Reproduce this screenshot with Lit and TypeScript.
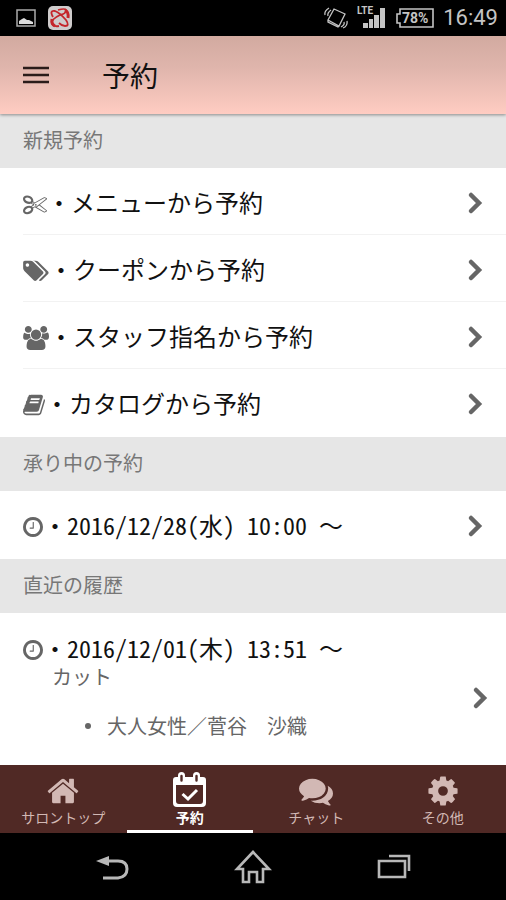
import { LitElement, html, css, svg } from "lit";
import { customElement } from "lit/decorators.js";
import { classMap } from "lit/directives/class-map.js";

interface Glyph {
  box: string;
  width: number;
  path: string;
}

const SCISSORS: Glyph = {
  box: "0 0 1792 1792",
  width: 24,
  path: "M960 896q26 0 45 19t19 45-19 45-45 19-45-19-19-45 19-45 45-19zm300 64l507 398q28 20 25 56-5 35-35 51l-128 64q-13 7-29 7-17 0-31-8l-690-387-110 66q-8 4-12 5 14 49 10 97-7 77-56 147.5t-132 123.5q-132 84-277 84-136 0-222-78-90-84-79-207 7-76 56-147t131-124q132-84 278-84 83 0 151 31 9-13 22-22l122-73-122-73q-13-9-22-22-68 31-151 31-146 0-278-84-82-53-131-124t-56-147q-5-59 15.5-113t63.5-93q85-79 222-79 145 0 277 84 83 52 132 123t56 148q4 48-10 97 4 1 12 5l110 66 690-387q14-8 31-8 16 0 29 7l128 64q30 16 35 51 3 36-25 56zm-681-260q46-42 21-108t-106-117q-92-59-192-59-74 0-113 36-46 42-21 108t106 117q92 59 192 59 74 0 113-36zm-85 745q81-51 106-117t-21-108q-39-36-113-36-100 0-192 59-81 51-106 117t21 108q39 36 113 36 100 0 192-59zm178-613l96 58v-11q0-36 33-56l14-8-79-44-26 26q-3 3-10 11t-12 12q-2 2-4 3.5t-3 2.5zm224 224l96 32 736-576-128-64-768 431v113l-160 96 9 8q2 2 7 6 4 4 11 12t11 12l26 26zm704 416l128-64-520-408-177 138q-2 3-13 7z",
};
const TAGS: Glyph = {
  box: "0 0 1920 1792",
  width: 26,
  path: "M448 448q0-53-37.5-90.5t-90.5-37.5-90.5 37.5-37.5 90.5 37.5 90.5 90.5 37.5 90.5-37.5 37.5-90.5zm1067 576q0 53-37 90l-491 492q-39 37-91 37-53 0-90-37l-715-716q-38-37-64.5-101t-26.5-117v-416q0-52 38-90t90-38h416q53 0 117 26.5t102 64.5l715 714q37 39 37 91zm384 0q0 53-37 90l-491 492q-39 37-91 37-36 0-59-14t-53-45l470-470q37-37 37-90 0-52-37-91l-715-714q-38-38-102-64.5t-117-26.5h224q53 0 117 26.5t102 64.5l715 714q37 39 37 91z",
};
const USERS: Glyph = {
  box: "64 0 1920 1792",
  width: 26,
  path: "M657 896q-162 5-265 128h-134q-82 0-138-40.5t-56-118.5q0-353 124-353 6 0 43.5 21t97.5 42.5 119 21.5q67 0 133-23-5 37-5 66 0 159 93 284zm1071 637q0 120-73 189.5t-194 69.5h-874q-121 0-194-69.5t-73-189.5q0-53 3.5-103.5t14-109 26.5-108.5 43-97.5 62-81 85.5-53.5 111.5-20q10 0 43 21.5t73 48 107 48 135 21.5 135-21.5 107-48 73-48 43-21.5q61 0 111.5 20t85.5 53.5 62 81 43 97.5 26.5 108.5 14 109 3.5 103.5zm-1024-1277q0 106-75 181t-181 75-181-75-75-181 75-181 181-75 181 75 75 181zm704 384q0 159-112.5 271.5t-271.5 112.5-271.5-112.5-112.5-271.5 112.5-271.5 271.5-112.5 271.5 112.5 112.5 271.5zm576 225q0 78-56 118.5t-138 40.5h-134q-103-123-265-128 93-125 93-284 0-29-5-66 66 23 133 23 59 0 119-21.5t97.5-42.5 43.5-21q124 0 124 353zm-128-609q0 106-75 181t-181 75-181-75-75-181 75-181 181-75 181 75 75 181z",
};
const BOOK: Glyph = {
  box: "64 0 1664 1792",
  width: 22,
  path: "M1703 478q40 57 18 129l-275 906q-19 64-76.5 107.5t-122.5 43.5h-923q-77 0-148.5-53.5t-99.5-131.5q-24-67-2-127 0-4 3-27t4-37q1-8-3-21.5t-3-19.5q2-11 8-21t16.5-23.5 16.5-23.5q23-38 45-91.5t30-91.5q3-10 .5-30t-.5-28q3-11 17-28t17-23q21-36 42-92t25-90q1-9-2.5-32t.5-28q4-13 22-30.5t22-22.5q19-26 42.5-84.5t27.5-96.5q1-8-3-25.5t-2-26.5q2-8 9-18t18-23 17-21q8-12 16.5-30.5t15-35 16-36 19.5-32 26.5-23.5 36-11.5 47.5 5.5l-1 3q38-9 51-9h761q74 0 114 56t18 130l-274 906q-36 119-71.5 153.5t-128.5 34.5h-869q-27 0-38 15-11 16-1 43 24 70 144 70h923q29 0 56-15.5t35-41.5l300-987q7-22 5-57 38 15 59 43zm-1064 2q-4 13 2 22.5t20 9.5h608q13 0 25.5-9.5t16.5-22.5l21-64q4-13-2-22.5t-20-9.5h-608q-13 0-25.5 9.5t-16.5 22.5zm-83 256q-4 13 2 22.5t20 9.5h608q13 0 25.5-9.5t16.5-22.5l21-64q4-13-2-22.5t-20-9.5h-608q-13 0-25.5 9.5t-16.5 22.5z",
};
const CLOCK: Glyph = {
  box: "128 0 1536 1792",
  width: 20,
  path: "M960 544v448q0 14-9 23t-23 9h-260q-14 0-23-9t-9-23v-24q0-14 9-23t23-9h204v-392q0-14 9-23t23-9h24q14 0 23 9t9 23zm480 352q0-148-73-273t-198-198-273-73-273 73-198 198-73 273 73 273 198 198 273 73 273-73 198-198 73-273zm224 0q0 209-103 385.5t-279.5 279.5-385.5 103-385.5-103-279.5-279.5-103-385.5 103-385.5 279.5-279.5 385.5-103 385.5 103 279.5 279.5 103 385.5z",
};

const HOME =
  "M1472 992v480q0 26-19 45t-45 19h-384v-384h-256v384h-384q-26 0-45-19t-19-45v-480q0-1 .5-3t.5-3l575-474 575 474q1 2 1 6zm223-69l-62 74q-8 9-21 11h-3q-13 0-21-7l-692-577-692 577q-12 8-24 7-13-2-21-11l-62-74q-8-10-7-23.5t11-21.5l719-599q32-26 76-26t76 26l244 204v-195q0-14 9-23t23-9h192q14 0 23 9t9 23v408l219 182q10 8 11 21.5t-7 23.5z";
const COMMENTS =
  "M1408 768q0 139-94 257t-256.5 186.5-353.5 68.5q-86 0-176-16-124 88-278 128-36 9-86 16h-3q-11 0-20.5-8t-11.5-21q-1-3-1-6.5t.5-6.5 2-6l2.5-5 3.5-5.5 4-5 4.5-5 4-4.5q5-6 23-25t26-29.5 22.5-29 25-38.5 20.5-44q-124-72-195-177t-71-224q0-139 94-257t256.5-186.5 353.5-68.5 353.5 68.5 256.5 186.5 94 257zm384 256q0 120-71 224.5t-195 176.5q10 24 20.5 44t25 38.5 22.5 29 26 29.5 23 25q1 1 4 4.5t4.5 5 4 5 3.5 5.5l2.5 5 2 6 .5 6.5-1 6.5q-3 14-13 22t-22 7q-50-7-86-16-154-40-278-128-90 16-176 16-271 0-472-132 58 4 88 4 161 0 309-45t264-129q125-92 192-212t67-254q0-77-23-152 129 71 204 178t75 230z";
const COG =
  "M1152 896q0-106-75-181t-181-75-181 75-75 181 75 181 181 75 181-75 75-181zm512-109v222q0 12-8 23t-20 13l-185 28q-19 54-39 91 35 50 107 138 10 12 10 25t-9 23q-27 37-99 108t-94 71q-12 0-26-9l-138-108q-44 23-91 38-16 136-29 186-7 28-36 28h-222q-14 0-24.5-8.5t-11.5-21.5l-28-184q-49-16-90-37l-141 107q-10 9-25 9-14 0-25-11-126-114-165-168-7-10-7-23 0-12 8-23 15-21 51-66.5t54-70.5q-27-50-41-99l-183-27q-13-2-21-12.5t-8-23.5v-222q0-12 8-23t19-13l186-28q14-46 39-92-40-57-107-138-10-12-10-24 0-10 9-23 26-36 98.5-107.5t94.5-71.5q13 0 26 10l138 107q44-23 91-38 16-136 29-186 7-28 36-28h222q14 0 24.5 8.5t11.5 21.5l28 184q49 16 90 37l142-107q9-9 24-9 13 0 25 10 129 119 165 170 7 8 7 22 0 12-8 23-15 21-51 66.5t-54 70.5q26 50 41 98l183 28q13 2 21 12.5t8 23.5z";

const CALENDAR = svg`
  <path fill="currentColor" fill-rule="evenodd" d="M3 5H30Q33 5 33 8V31Q33 35 29 35H4Q0 35 0 31V8Q0 5 3 5ZM3 13V29Q3 32 6 32H27Q30 32 30 29V13Z"/>
  <rect x="5" y="0" width="7" height="12" rx="3.5" fill="currentColor"/>
  <rect x="20" y="0" width="7" height="12" rx="3.5" fill="currentColor"/>
  <path d="M8.500 4V8.500M23.500 4V8.500" stroke="#502925" stroke-width="2.400" stroke-linecap="round"/>
  <path d="M9.500 22L15 27L24 18" fill="none" stroke="currentColor" stroke-width="3"/>`;

const glyph = (g: Glyph) => html`
  <svg class="glyph" width=${g.width} height="24" viewBox=${g.box} aria-hidden="true">
    <path fill="currentColor" d=${g.path} />
  </svg>`;

const chevron = () => html`
  <svg class="chevron" width="16" height="24" viewBox="0 0 16 24" aria-hidden="true">
    <path d="M4 4L12 12L4 20" fill="none" stroke="currentColor" stroke-width="4.500" stroke-linecap="round" />
  </svg>`;

@customElement("app-root")
export class AppRoot extends LitElement {
  static styles = css`
    :host {
      display: flex;
      flex-direction: column;
      min-height: 100vh;
      background: #fff;
      color: #111;
      font-family: "Noto Sans CJK JP", sans-serif;
    }
    svg {
      display: block;
      flex: none;
    }
    a {
      color: inherit;
      text-decoration: none;
    }
    button {
      display: flex;
      padding: 0;
      border: 0;
      background: none;
      color: inherit;
      font: inherit;
      cursor: pointer;
    }
    .status {
      display: flex;
      align-items: center;
      justify-content: space-between;
      height: 36px;
      padding: 0 8px 0 16px;
      background: #000;
      color: #c4c4c4;
    }
    .side {
      display: flex;
      align-items: center;
      gap: 12px;
    }
    .side.right {
      gap: 8px;
    }
    .battery {
      font: 700 14px Roboto, sans-serif;
      fill: currentColor;
    }
    .lte {
      font: 700 10px Roboto, sans-serif;
      fill: currentColor;
    }
    .time {
      font: 400 22px/36px Roboto, sans-serif;
    }
    .header {
      display: flex;
      align-items: center;
      gap: 52px;
      height: 78px;
      padding: 0 22px;
      background: linear-gradient(#d2aaa0, #dfb5ac 40%, #ffccc2);
      box-shadow: 0 1px 3px rgba(0, 0, 0, 0.4);
      z-index: 1;
    }
    h1 {
      margin: 0;
      font-size: 28px;
      font-weight: 400;
      line-height: 40px;
    }
    main {
      flex: 1;
    }
    h2 {
      margin: 0;
      padding: 0 23px 2px;
      background: #e6e6e6;
      color: #777;
      font-size: 20px;
      font-weight: 400;
      line-height: 52px;
    }
    ul {
      margin: 0;
      padding: 0;
      list-style: none;
    }
    .menu {
      padding: 0 0 2px 23px;
    }
    .menu > li + li {
      border-top: 1px solid #f2f2f2;
    }
    .row {
      display: flex;
      align-items: center;
      padding: 2px 23px 0 0;
      font-size: 24px;
      line-height: 64px;
    }
    .label {
      flex: 1;
      white-space: pre;
    }
    .date {
      font-feature-settings: "hwid";
    }
    .glyph {
      margin-top: 4px;
      color: #666;
    }
    .chevron {
      margin-top: 2px;
      color: #666;
    }
    .history {
      display: flex;
      align-items: center;
      justify-content: space-between;
      padding: 18px 18px 22px 23px;
      color: #666;
      font-size: 20px;
      line-height: 22px;
    }
    .history .chevron {
      margin-top: 24px;
    }
    .when {
      display: flex;
      align-items: center;
      color: #111;
      font-size: 24px;
      line-height: 34px;
    }
    .course {
      margin: 1px 0 24px 29px;
    }
    .detail {
      padding-left: 62px;
    }
    .detail li {
      display: flex;
      align-items: center;
      gap: 16px;
      line-height: 28px;
    }
    .detail li::before {
      content: "";
      width: 6px;
      height: 6px;
      border-radius: 50%;
      background: #666;
    }
    .tabs {
      display: grid;
      grid-template-columns: repeat(4, 1fr);
      height: 68px;
      background: #502925;
      color: #d2b8b4;
      font-size: 14px;
      line-height: 18px;
    }
    .tab {
      display: flex;
      flex-direction: column;
      align-items: center;
      justify-content: flex-end;
      padding-bottom: 4px;
      border-bottom: 3px solid transparent;
    }
    .tab.active {
      border-color: #fff;
      color: #fff;
      font-weight: 700;
    }
    .system {
      display: flex;
      justify-content: center;
      align-items: center;
      gap: 104px;
      height: 67px;
      background: #000;
      color: #b8b8b8;
    }
  `;

  private menu = [
    { icon: SCISSORS, text: "メニューから予約" },
    { icon: TAGS, text: "クーポンから予約" },
    { icon: USERS, text: "スタッフ指名から予約" },
    { icon: BOOK, text: "カタログから予約" },
  ];

  private tabs = [
    { text: "サロントップ", path: HOME },
    { text: "予約", path: "" },
    { text: "チャット", path: COMMENTS },
    { text: "その他", path: COG },
  ];

  private row(icon: Glyph, text: unknown) {
    return html`<li>
      <a class="row" href="#">${glyph(icon)}<span class="label">・${text}</span>${chevron()}</a>
    </li>`;
  }

  private date(text: string) {
    return html`<span class="date">${text} </span>～`;
  }

  private tabIcon(path: string) {
    return path
      ? html`<svg width="34" height="34" viewBox="0 0 1792 1792" aria-hidden="true">
          <path fill="currentColor" d=${path} />
        </svg>`
      : html`<svg width="33" height="36" viewBox="0 0 33 36" aria-hidden="true">${CALENDAR}</svg>`;
  }

  render() {
    return html`
      <div class="status">
        <div class="side">
          <svg width="20" height="20" viewBox="0 0 20 20" aria-hidden="true">
            <path d="M1 2H19V18H1Z" fill="none" stroke="#aaa" stroke-width="1.500" />
            <path d="M3 16V13L6 11L8 10L11 12L13 12L15 13L17 14V16Z" fill="#ddd" />
          </svg>
          <svg width="24" height="24" viewBox="0 0 24 24" aria-hidden="true">
            <rect width="24" height="24" rx="5" fill="#cfcccc" />
            <g fill="none" stroke="#c4262b">
              <path d="M5 11Q1 4 7 5Q12 7 18 14Q22 20 17 20Q14 20 11 17" stroke-width="1.800" />
              <path d="M10 4Q17 2 18 4Q18 8 12 9Q3 13 4 18Q6 21 11 20" stroke-width="1.800" />
              <path d="M17 4Q21 6 20 12" stroke-width="3" />
              <path d="M4 13Q3 18 7 20" stroke-width="3" />
            </g>
          </svg>
        </div>
        <div class="side right">
          <svg width="26" height="24" viewBox="0 0 26 24" aria-hidden="true">
            <g fill="none" stroke="currentColor" stroke-width="1.300">
              <path d="M11 3L22 8L16 20L5 14ZM5 14L5 16L15 21L16 20" />
              <path d="M2 9Q1 5 6 2M5 10Q4 7 8 4M20 22Q25 20 24 15M18 21Q22 19 21 16" />
            </g>
          </svg>
          <svg width="30" height="26" viewBox="0 0 30 26" aria-label="LTE">
            <text class="lte" x="0" y="9">LTE</text>
            <path fill="currentColor" d="M6 18h5v5h-5zM12 14h4v9h-4zM17 10h5v13h-5zM23 3h5v20h-5z" />
          </svg>
          <svg width="40" height="22" viewBox="0 0 40 22" aria-label="78%">
            <path d="M5 2H38V20H5V16H2V7H5Z" fill="none" stroke="currentColor" stroke-width="1.600" />
            <text class="battery" x="7" y="16">78%</text>
          </svg>
          <span class="time">16:49</span>
        </div>
      </div>

      <header class="header">
        <button aria-label="メニュー">
          <svg width="28" height="24" viewBox="0 0 28 24">
            <path d="M1 5H27M1 12H27M1 19H27" stroke="#2a1c1a" stroke-width="2.600" />
          </svg>
        </button>
        <h1>予約</h1>
      </header>

      <main>
        <h2>新規予約</h2>
        <ul class="menu">
          ${this.menu.map((m) => this.row(m.icon, m.text))}
        </ul>
        <h2>承り中の予約</h2>
        <ul class="menu">
          ${this.row(CLOCK, this.date("2016/12/28(水) 10:00"))}
        </ul>
        <h2>直近の履歴</h2>
        <a class="history" href="#">
          <div>
            <div class="when">${glyph(CLOCK)}<span class="label">・${this.date("2016/12/01(木) 13:51")}</span></div>
            <div class="course">カット</div>
            <ul class="detail">
              <li>大人女性／菅谷　沙織</li>
            </ul>
          </div>
          ${chevron()}
        </a>
      </main>

      <nav class="tabs">
        ${this.tabs.map(
          (t) => html`<a class=${classMap({ tab: true, active: !t.path })} href="#">
            ${this.tabIcon(t.path)}<span>${t.text}</span>
          </a>`
        )}
      </nav>

      <div class="system">
        <button aria-label="戻る">
          <svg width="36" height="36" viewBox="0 0 36 36">
            <path d="M11 12H24Q33 12 33 20T24 29H9" fill="none" stroke="currentColor" stroke-width="3" />
            <path d="M2 12L15 7V17Z" fill="currentColor" />
          </svg>
        </button>
        <button aria-label="ホーム">
          <svg width="38" height="36" viewBox="0 0 38 36">
            <path d="M19 3L35 20H29V33H23V23H15V33H9V20H3Z" fill="none" stroke="currentColor" stroke-width="2.600" />
          </svg>
        </button>
        <button aria-label="最近のアプリ">
          <svg width="36" height="36" viewBox="0 0 36 36">
            <path d="M3 12H29V28H3ZM13 7H33V22" fill="none" stroke="currentColor" stroke-width="2.600" />
          </svg>
        </button>
      </div>
    `;
  }
}
